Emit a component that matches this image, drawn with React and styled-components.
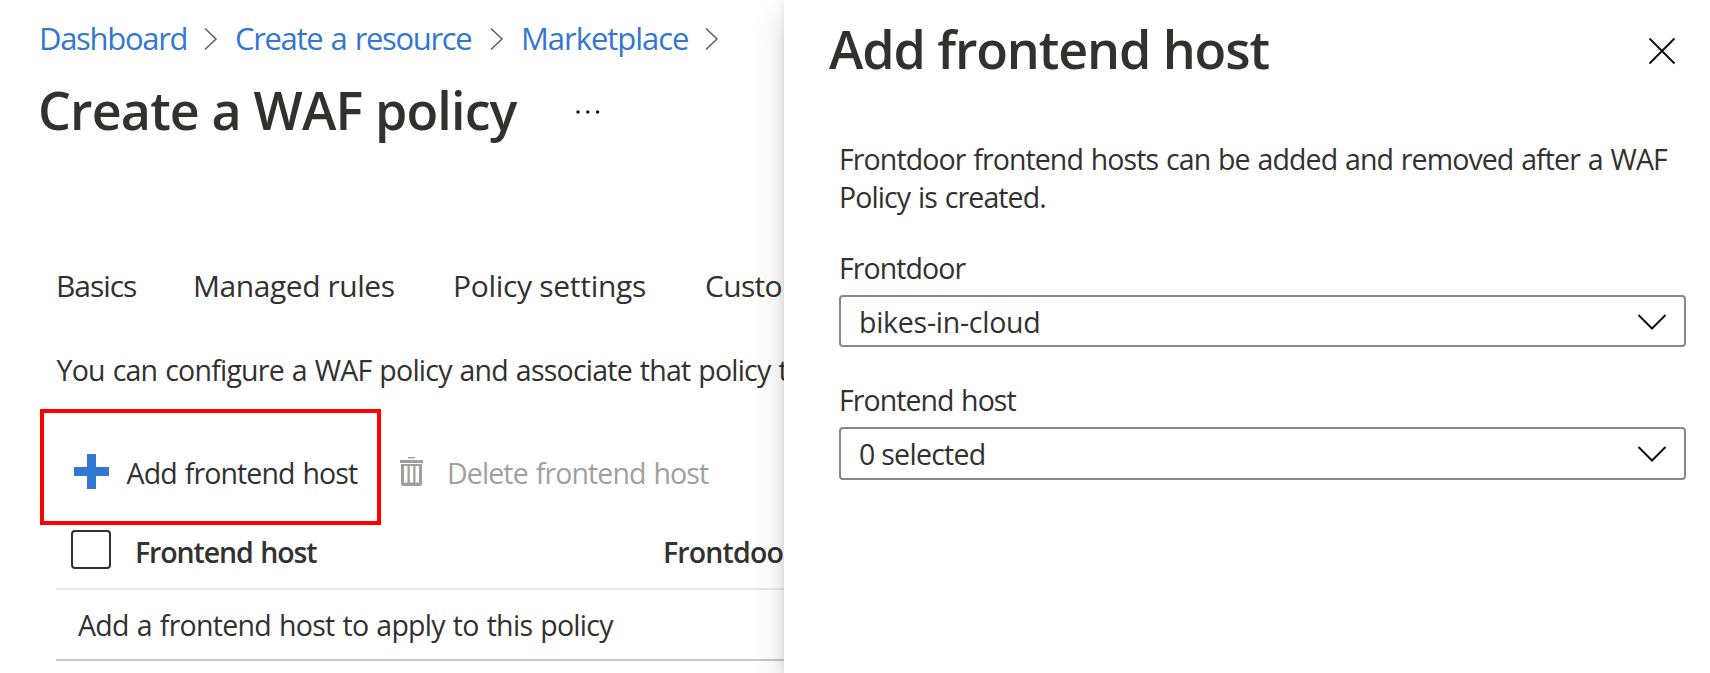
import React from 'react';
import styled, { createGlobalStyle } from 'styled-components';

const GlobalStyle = createGlobalStyle`
  *, *::before, *::after { box-sizing: border-box; }
  body {
    margin: 0;
    background: #fff;
    color: #323130;
    font-family: "Open Sans", "Noto Sans", sans-serif;
    font-size: 28.5px;
    overflow: hidden;
  }
`;

const Screen = styled.div`
  display: flex;
  width: 1710px;
  height: 673px;
  overflow: hidden;
  background: #fff;
`;

const Main = styled.main`
  flex: 0 0 784px;
  padding-top: 18px;
  overflow: hidden;
  white-space: nowrap;
`;

const Breadcrumb = styled.nav`
  display: flex;
  align-items: center;
  height: 40px;
  padding-left: 39px;
  font-size: 31px;
  line-height: 40px;
  word-spacing: 1.5px;
`;

const Crumb = styled.a`
  flex: none;
  width: ${(p) => p.$width}px;
  color: #3277d1;
  letter-spacing: ${(p) => p.$tracking}px;
`;

const CrumbArrow = styled.svg`
  flex: none;
  width: 14px;
  height: 24px;
  margin: 2px ${(p) => p.$after || 0}px 0 0;
  fill: none;
  stroke: #605e5c;
  stroke-width: 1.5;
`;

const TitleRow = styled.div`
  display: flex;
  align-items: center;
  height: 69px;
  margin-top: 17px;
  padding-left: 38px;
`;

const Title = styled.h1`
  flex: none;
  width: ${(p) => p.$width || 'auto'};
  margin: 0;
  font-size: 52px;
  font-weight: 600;
  line-height: 69px;
  letter-spacing: ${(p) => p.$tracking}px;
`;

const MoreIcon = styled.svg`
  width: 26px;
  height: 6px;
  margin-top: 5px;
  fill: #111;
`;

const Tabs = styled.div`
  display: flex;
  margin-top: 122px;
  padding-left: 56px;
  font-size: 30px;
  line-height: 40px;
`;

const Tab = styled.div`
  flex: none;
  width: ${(p) => p.$width}px;
  letter-spacing: ${(p) => p.$tracking}px;
`;

const Description = styled.p`
  margin: 45px 0 0;
  padding-left: 56.5px;
  line-height: 39px;
  letter-spacing: -0.77px;
  word-spacing: 1.25px;
`;

const Toolbar = styled.div`
  display: flex;
  margin-top: 19px;
  padding-left: 40px;
  line-height: 37px;
`;

const Highlight = styled.div`
  flex: none;
  width: 341px;
  height: 116px;
  padding: 41px 0 0 30px;
  border: 4px solid #f00;
`;

const Command = styled.button`
  display: flex;
  align-items: flex-start;
  gap: ${(p) => p.$gap}px;
  padding: 0;
  border: 0;
  background: none;
  color: ${(p) => (p.disabled ? '#a19f9d' : 'inherit')};
  font: inherit;
  line-height: 39px;
  letter-spacing: -0.88px;
  word-spacing: 1.4px;
`;

const DeleteSlot = styled.div`
  padding: 45px 0 0 19px;
`;

const PlusIcon = styled.svg`
  width: 35px;
  height: 35px;
  fill: #3277d1;
`;

const TrashIcon = styled.svg`
  width: 23px;
  height: 30px;
  margin-top: 3px;
  fill: currentColor;
`;

const Table = styled.div`
  margin-left: 56px;
`;

const HeaderRow = styled.div`
  display: grid;
  grid-template-columns: 64px 528px 1fr;
  height: 65px;
  padding: 5px 0 0 15px;
  border-bottom: 2px solid #e9e9e9;
  font-weight: 600;
  line-height: 38px;
`;

const HeaderCell = styled.div`
  padding-top: 3px;
  letter-spacing: ${(p) => p.$tracking}px;
  word-spacing: 1.2px;
`;

const Checkbox = styled.span`
  width: 40px;
  height: 39px;
  border: 2px solid #323130;
  border-radius: 4px;
`;

const EmptyRow = styled.div`
  height: 71px;
  padding: 16px 0 0 22px;
  border-bottom: 2px solid #c8c8c8;
  line-height: 39px;
  letter-spacing: -0.7px;
  word-spacing: 1.2px;
`;

const Panel = styled.aside`
  position: relative;
  z-index: 1;
  flex: 1;
  padding: 14px 24px 0 45px;
  background: #fff;
  box-shadow: 0 16px 34px rgba(0, 0, 0, 0.13), 0 4px 10px rgba(0, 0, 0, 0.12);
`;

const PanelHeader = styled.header`
  display: flex;
  justify-content: space-between;
  height: 69px;
  padding-right: 10px;
`;

const CloseIcon = styled.svg`
  width: 28px;
  height: 28px;
  margin-top: 23px;
  fill: none;
  stroke: #111;
  stroke-width: 2;
`;

const PanelBody = styled.div`
  padding-left: 10px;
  line-height: 38px;
`;

const Intro = styled.p`
  margin: 57px 0 0;
  letter-spacing: -0.9px;
  word-spacing: 1.3px;
`;

const Field = styled.div`
  margin-top: ${(p) => p.$top}px;
`;

const Label = styled.div`
  padding-bottom: 8px;
  letter-spacing: ${(p) => p.$tracking}px;
  word-spacing: 1px;
`;

const Select = styled.div`
  display: flex;
  align-items: center;
  justify-content: space-between;
  height: ${(p) => p.$height}px;
  padding: 1px 17px 0 18px;
  border: 2px solid #8a8886;
  border-radius: 4px;
  letter-spacing: ${(p) => p.$tracking}px;
`;

const SelectArrow = styled.svg`
  width: 30px;
  height: 18px;
  fill: none;
  stroke: #111;
  stroke-width: 2;
`;

function Arrow({ after }) {
  return (
    <CrumbArrow viewBox="0 0 14 24" $after={after}>
      <path d="M1 1.5 12 12 1 22.5" />
    </CrumbArrow>
  );
}

function Dropdown({ label, value, top, height, labelTracking, tracking }) {
  return (
    <Field $top={top}>
      <Label $tracking={labelTracking}>{label}</Label>
      <Select $height={height} $tracking={tracking}>
        <span>{value}</span>
        <SelectArrow viewBox="0 0 30 18">
          <path d="M1.5 2 15 15.5 28.5 2" />
        </SelectArrow>
      </Select>
    </Field>
  );
}

export default function App() {
  return (
    <>
      <GlobalStyle />
      <Screen>
        <Main>
          <Breadcrumb>
            <Crumb $width={165} $tracking={-1.3}>Dashboard</Crumb>
            <Arrow after={17} />
            <Crumb $width={255} $tracking={-1.33}>Create a resource</Crumb>
            <Arrow after={17} />
            <Crumb $width={184} $tracking={-1.04}>Marketplace</Crumb>
            <Arrow />
          </Breadcrumb>
          <TitleRow>
            <Title $width="537px" $tracking={-0.85}>Create a WAF policy</Title>
            <MoreIcon viewBox="0 0 26 6">
              <circle cx="3" cy="3" r="1.7" />
              <circle cx="12.8" cy="3" r="1.7" />
              <circle cx="22.6" cy="3" r="1.7" />
            </MoreIcon>
          </TitleRow>
          <Tabs>
            <Tab $width={137} $tracking={-1.05}>Basics</Tab>
            <Tab $width={260} $tracking={-0.448}>Managed rules</Tab>
            <Tab $width={252} $tracking={-0.302}>Policy settings</Tab>
            <Tab $width={180} $tracking={-0.7}>Custom rules</Tab>
          </Tabs>
          <Description>
            You can configure a WAF policy and associate that policy to
          </Description>
          <Toolbar>
            <Highlight>
              <Command $gap={17.5}>
                <PlusIcon viewBox="0 0 35 35">
                  <path d="M13 0h9v13h13v9H22v13h-9V22H0v-9h13z" />
                </PlusIcon>
                Add frontend host
              </Command>
            </Highlight>
            <DeleteSlot>
              <Command $gap={24} disabled>
                <TrashIcon viewBox="0 0 23 30">
                  <path d="M8 0h7v1.3H8z" />
                  <path d="M0 3h23v3H0z" />
                  <path
                    fillRule="evenodd"
                    d="M1 7h21v19.5q0 2.5-2.5 2.5h-16Q1 29 1 26.5zM4 9v16.5h3.500V9zM9.750 9v16.500h3.500V9zM15.500 9v16.500H19V9z"
                  />
                </TrashIcon>
                Delete frontend host
              </Command>
            </DeleteSlot>
          </Toolbar>
          <Table>
            <HeaderRow>
              <Checkbox />
              <HeaderCell $tracking={-1.1}>Frontend host</HeaderCell>
              <HeaderCell $tracking={-0.85}>Frontdoor</HeaderCell>
            </HeaderRow>
            <EmptyRow>Add a frontend host to apply to this policy</EmptyRow>
          </Table>
        </Main>
        <Panel>
          <PanelHeader>
            <Title $tracking={-1.11}>Add frontend host</Title>
            <CloseIcon viewBox="0 0 28 28">
              <path d="M1.5 1.5 26.5 26.5M26.5 1.5 1.5 26.5" />
            </CloseIcon>
          </PanelHeader>
          <PanelBody>
            <Intro>
              Frontdoor frontend hosts can be added and removed after a WAF
              <br />
              Policy is created.
            </Intro>
            <Dropdown
              label="Frontdoor"
              value="bikes-in-cloud"
              top={33}
              height={52}
              labelTracking={-0.92}
              tracking={-0.26}
            />
            <Dropdown
              label="Frontend host"
              value="0 selected"
              top={34}
              height={53}
              labelTracking={-0.93}
              tracking={-0.72}
            />
          </PanelBody>
        </Panel>
      </Screen>
    </>
  );
}
